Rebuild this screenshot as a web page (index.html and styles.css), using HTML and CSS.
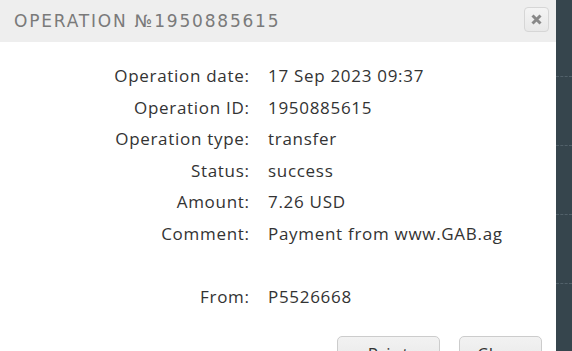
FILE: index.html
```html
<!DOCTYPE html>
<html lang="en">
<head>
    <meta charset="UTF-8">
    <title>Operation</title>
    <link rel="stylesheet" href="styles.css">
</head>
<body>
    <div class="modal">
        <div class="modal-header">
            <h2>OPERATION №1950885615</h2>
            <button class="close-x" type="button">
                <svg viewBox="0 0 11 11" width="11" height="11">
                    <path d="M1.5 1.5L9.5 9.5M9.5 1.5L1.5 9.5" stroke="#888888" stroke-width="3" fill="none"/>
                </svg>
            </button>
        </div>

        <div class="details">
            <div class="label">Operation date:</div>
            <div class="value">17 Sep 2023 09:37</div>

            <div class="label">Operation ID:</div>
            <div class="value">1950885615</div>

            <div class="label">Operation type:</div>
            <div class="value">transfer</div>

            <div class="label">Status:</div>
            <div class="value">success</div>

            <div class="label">Amount:</div>
            <div class="value">7.26 USD</div>

            <div class="label">Comment:</div>
            <div class="value">Payment from www.GAB.ag</div>

            <div class="label"></div>
            <div class="value"></div>

            <div class="label">From:</div>
            <div class="value">P5526668</div>
        </div>

        <div class="modal-footer">
            <button class="btn btn-print" type="button">Print</button>
            <button class="btn btn-close" type="button">Close</button>
        </div>
    </div>

    <div class="backdrop">
        <div class="stub"></div>
        <div class="stub"></div>
        <div class="stub"></div>
        <div class="stub"></div>
    </div>
</body>
</html>
```

FILE: styles.css
```css
body {
    margin: 0;
    padding: 0;
    display: flex;
    height: 351px;
    overflow: hidden;
    background-color: #36454d;
    font-family: "Open Sans", Arial, sans-serif;
    color: #333333;
}

.modal {
    width: 556px;
    flex-shrink: 0;
    background-color: #ffffff;
}

.modal-header {
    height: 42px;
    background-color: #eeeeee;
    display: flex;
    align-items: center;
    justify-content: space-between;
    padding: 0 7px 0 14px;
}

.modal-header h2 {
    margin: 0;
    font-family: "DejaVu Sans", sans-serif;
    font-weight: normal;
    font-size: 17px;
    letter-spacing: 1.8px;
    color: #7a7a7a;
}

.close-x {
    width: 25px;
    height: 25px;
    padding: 0;
    margin-top: -3px;
    border: 1px solid #d6d6d6;
    border-radius: 4px;
    background: linear-gradient(#f4f4f4, #e8e8e8);
    display: flex;
    align-items: center;
    justify-content: center;
    cursor: pointer;
}

.details {
    display: grid;
    grid-template-columns: 249px 1fr;
    grid-auto-rows: 31.5px;
    column-gap: 19px;
    padding-top: 18px;
    font-size: 17px;
    font-weight: 500;
    letter-spacing: 0.7px;
    line-height: 31.5px;
}

.label {
    text-align: right;
    margin-right: -0.7px;
}

.modal-footer {
    display: flex;
    justify-content: flex-end;
    gap: 19px;
    padding: 24px 14px 0 0;
}

.btn {
    padding: 5px 0;
    border: 1px solid #cccccc;
    border-radius: 5px;
    background: linear-gradient(#f2f2f2, #e6e6e6);
    color: #333333;
    font-family: "Open Sans", Arial, sans-serif;
    font-size: 17px;
    font-weight: 500;
    letter-spacing: 0.7px;
    line-height: 24px;
    cursor: pointer;
}

.btn-print {
    width: 103px;
}

.btn-close {
    width: 83px;
}

.backdrop {
    flex: 1;
    display: flex;
    flex-direction: column;
    padding-top: 76px;
    gap: 68px;
}

.stub {
    height: 0;
    border-top: 1px dashed #52616a;
}
```
